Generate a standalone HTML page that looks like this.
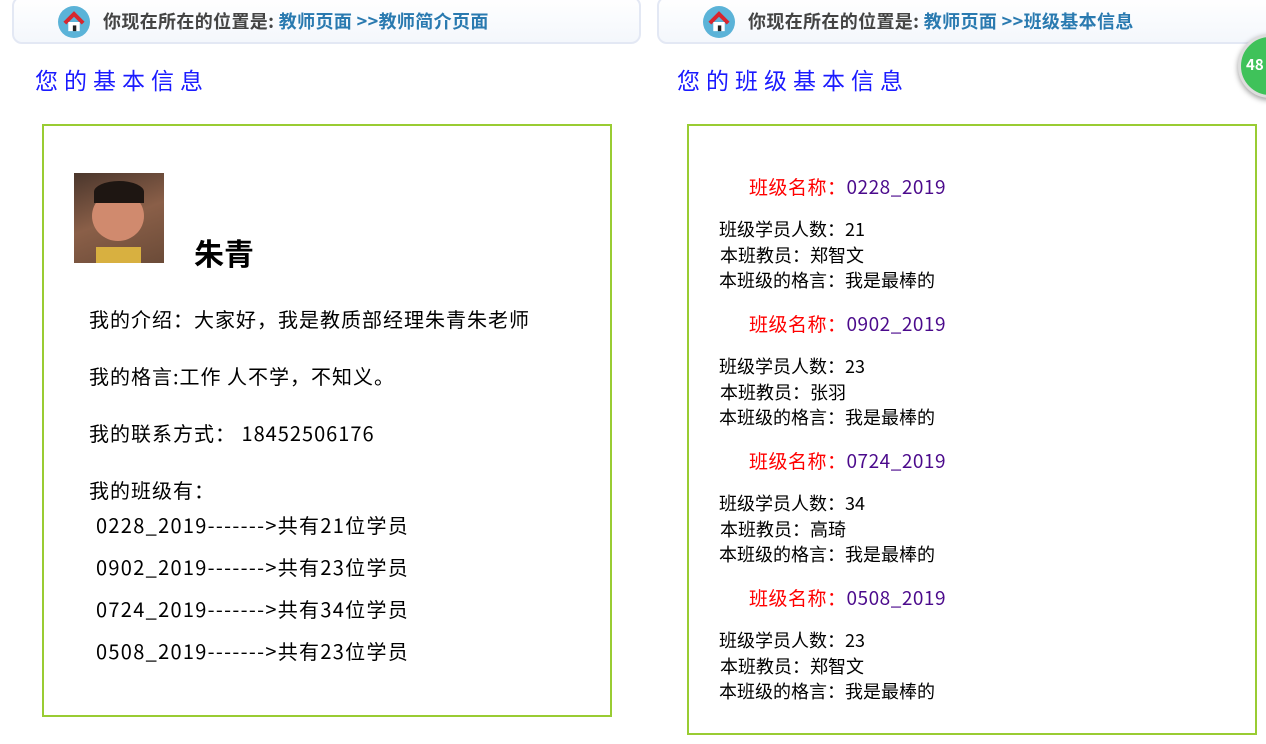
<!DOCTYPE html>
<html><head><meta charset="utf-8"><style>
body{margin:0;width:1266px;height:744px;background:#fff;position:relative;overflow:hidden;font-family:"Noto Sans CJK SC","Liberation Sans",sans-serif;}
.hd{position:absolute;top:-4px;height:48px;border:2px solid #e3e8f4;border-radius:10px;background:linear-gradient(#fff,#f4f7fc);box-sizing:border-box;}
.hd .ic{position:absolute;left:44px;top:8px;width:32px;height:32px;border-radius:50%;background:#5bb3d8;}
.hd .tx{position:absolute;left:89px;top:14px;font-size:18px;letter-spacing:0.35px;line-height:1;font-weight:bold;color:#444;white-space:nowrap}
.hd .tx span{color:#2a7ab0}
.tt{position:absolute;top:68px;font-size:23px;line-height:1;color:#1a1aff;letter-spacing:6px}
.box{position:absolute;border:2px solid #99cc33;box-sizing:border-box}
.a{position:absolute;white-space:nowrap;color:#000;line-height:1}
.l{font-size:20px;letter-spacing:1px}
.li{font-size:20px;letter-spacing:1.3px}
.r{font-size:18px;line-height:1}
.cn{font-size:19px;letter-spacing:0.5px;color:#ff0000}
.cn span{color:#4b0a8c}
</style></head><body>
<div class="hd" style="left:12px;width:629px"><div class="ic"><svg width="32" height="32" viewBox="0 0 28 28"><path d="M6 15 L14 7 L22 15" stroke="#d8262e" stroke-width="3.5" fill="none"/><rect x="9" y="14" width="10" height="8" fill="#fff"/><rect x="13" y="17" width="3" height="5" fill="#222"/></svg></div><div class="tx">你现在所在的位置是: <span>教师页面 &gt;&gt;教师简介页面</span></div></div>
<div class="hd" style="left:657px;width:640px"><div class="ic"><svg width="32" height="32" viewBox="0 0 28 28"><path d="M6 15 L14 7 L22 15" stroke="#d8262e" stroke-width="3.5" fill="none"/><rect x="9" y="14" width="10" height="8" fill="#fff"/><rect x="13" y="17" width="3" height="5" fill="#222"/></svg></div><div class="tx">你现在所在的位置是: <span>教师页面 &gt;&gt;班级基本信息</span></div></div>
<div style="position:absolute;left:1238px;top:34px;width:64px;height:64px;border-radius:50%;background:#3fc25a;border:3px solid #ddd;box-shadow:0 2px 6px rgba(0,0,0,.4);box-sizing:border-box"><span style="position:absolute;left:5px;top:20px;color:#fff;font-weight:bold;font-size:15px;line-height:1">48</span></div>
<div class="tt" style="left:35px">您的基本信息</div>
<div class="tt" style="left:677px">您的班级基本信息</div>
<div class="box" style="left:42px;top:124px;width:570px;height:593px"></div>
<div class="box" style="left:687px;top:124px;width:570px;height:611px"></div>
<div style="position:absolute;left:74px;top:173px;width:90px;height:90px;background:linear-gradient(160deg,#4a362c,#8a5f48 50%,#6b4b38);overflow:hidden"><div style="position:absolute;left:18px;top:18px;width:52px;height:50px;border-radius:50%;background:#d08a6e"></div><div style="position:absolute;left:20px;top:8px;width:50px;height:22px;border-radius:50% 50% 0 0;background:#1e1612"></div><div style="position:absolute;left:22px;top:74px;width:45px;height:16px;background:#d8b040"></div></div>
<div class="a" style="left:194px;top:237px;font-size:30px;font-weight:bold">朱青</div>
<div class="a l" style="left:89px;top:309px">我的介绍：大家好，我是教质部经理朱青朱老师</div>
<div class="a l" style="left:89px;top:366px">我的格言:工作 人不学，不知义。</div>
<div class="a l" style="left:89px;top:423px">我的联系方式： 18452506176</div>
<div class="a l" style="left:89px;top:480px">我的班级有：</div>
<div class="a li" style="left:96px;top:515px">0228_2019-------&gt;共有21位学员</div>
<div class="a li" style="left:96px;top:557px">0902_2019-------&gt;共有23位学员</div>
<div class="a li" style="left:96px;top:599px">0724_2019-------&gt;共有34位学员</div>
<div class="a li" style="left:96px;top:641px">0508_2019-------&gt;共有23位学员</div>

<div class="a cn" style="left:749px;top:177px">班级名称：<span>0228_2019</span></div>
<div class="a r" style="left:719px;top:220px">班级学员人数：21</div>
<div class="a r" style="left:720px;top:246px">本班教员：郑智文</div>
<div class="a r" style="left:719px;top:271px">本班级的格言：我是最棒的</div>
<div class="a cn" style="left:749px;top:314px">班级名称：<span>0902_2019</span></div>
<div class="a r" style="left:719px;top:357px">班级学员人数：23</div>
<div class="a r" style="left:720px;top:383px">本班教员：张羽</div>
<div class="a r" style="left:719px;top:408px">本班级的格言：我是最棒的</div>
<div class="a cn" style="left:749px;top:451px">班级名称：<span>0724_2019</span></div>
<div class="a r" style="left:719px;top:494px">班级学员人数：34</div>
<div class="a r" style="left:720px;top:520px">本班教员：高琦</div>
<div class="a r" style="left:719px;top:545px">本班级的格言：我是最棒的</div>
<div class="a cn" style="left:749px;top:588px">班级名称：<span>0508_2019</span></div>
<div class="a r" style="left:719px;top:631px">班级学员人数：23</div>
<div class="a r" style="left:720px;top:657px">本班教员：郑智文</div>
<div class="a r" style="left:719px;top:682px">本班级的格言：我是最棒的</div>
</body></html>
